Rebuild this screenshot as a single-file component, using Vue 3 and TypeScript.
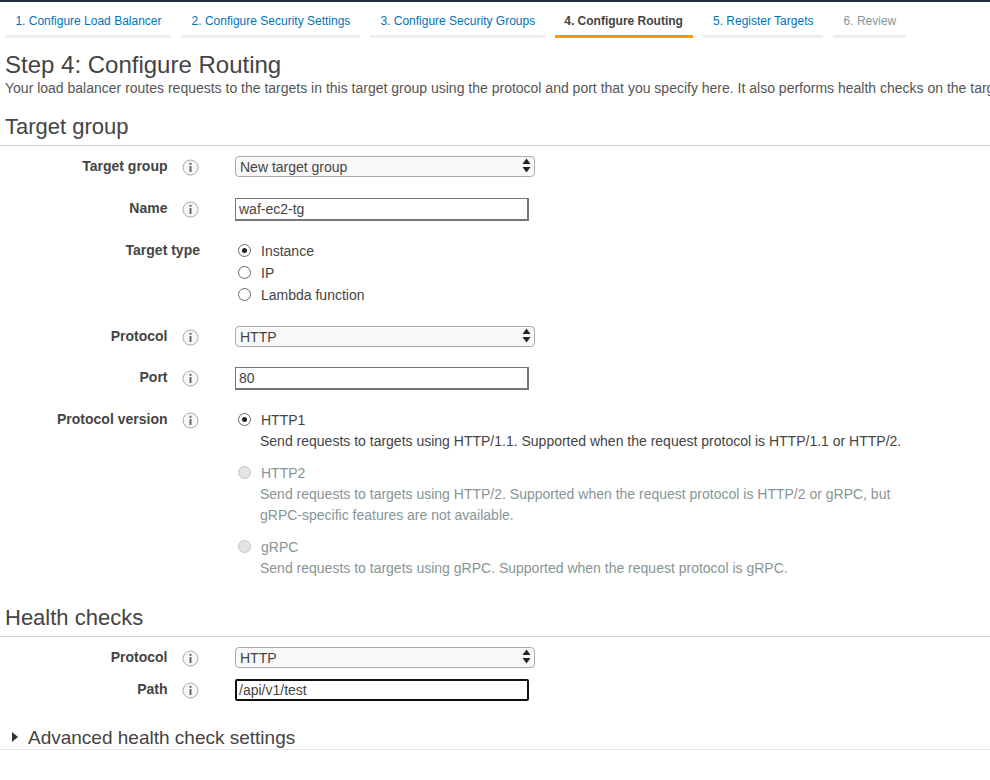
<template>
  <div class="page">
    <nav class="tabs">
      <a
        v-for="tab in tabs"
        :key="tab.label"
        class="tab"
        :class="tab.state"
      >{{ tab.label }}</a>
    </nav>

    <h1 class="title">Step 4: Configure Routing</h1>
    <p class="intro">
      Your load balancer routes requests to the targets in this target group using the protocol and port that you specify here. It also performs health checks on the targets using these health check settings.
    </p>

    <h2 class="section-title first">Target group</h2>
    <div class="form">
      <div class="row row-select">
        <label class="label">Target group</label>
        <svg class="info" width="17" height="17" viewBox="0 0 17 17">
          <circle cx="8.5" cy="8.5" r="7.5" fill="#f7f7f7" stroke="#a8a8a8" />
          <rect x="7.5" y="7" width="2" height="6" fill="#666" />
          <rect x="7.5" y="3.8" width="2" height="2" fill="#666" />
        </svg>
        <div class="select-wrap">
          <select class="select">
            <option>New target group</option>
          </select>
          <svg class="select-arrow" width="9" height="15" viewBox="0 0 9 15">
            <path d="M4.5 0.5 L8.5 6 H0.5 Z M0.5 9 H8.5 L4.5 14.5 Z" fill="#222" />
          </svg>
        </div>
      </div>

      <div class="row row-input">
        <label class="label">Name</label>
        <svg class="info" width="17" height="17" viewBox="0 0 17 17">
          <circle cx="8.5" cy="8.5" r="7.5" fill="#f7f7f7" stroke="#a8a8a8" />
          <rect x="7.5" y="7" width="2" height="6" fill="#666" />
          <rect x="7.5" y="3.8" width="2" height="2" fill="#666" />
        </svg>
        <input class="input" value="waf-ec2-tg" />
      </div>

      <div class="row row-radios">
        <label class="label wide">Target type</label>
        <div class="radios">
          <label v-for="t in targetTypes" :key="t" class="radio-line">
            <input type="radio" name="target-type" :checked="t === 'Instance'" />
            <span>{{ t }}</span>
          </label>
        </div>
      </div>

      <div class="row row-select short">
        <label class="label">Protocol</label>
        <svg class="info" width="17" height="17" viewBox="0 0 17 17">
          <circle cx="8.5" cy="8.5" r="7.5" fill="#f7f7f7" stroke="#a8a8a8" />
          <rect x="7.5" y="7" width="2" height="6" fill="#666" />
          <rect x="7.5" y="3.8" width="2" height="2" fill="#666" />
        </svg>
        <div class="select-wrap">
          <select class="select">
            <option>HTTP</option>
          </select>
          <svg class="select-arrow" width="9" height="15" viewBox="0 0 9 15">
            <path d="M4.5 0.5 L8.5 6 H0.5 Z M0.5 9 H8.5 L4.5 14.5 Z" fill="#222" />
          </svg>
        </div>
      </div>

      <div class="row row-input">
        <label class="label">Port</label>
        <svg class="info" width="17" height="17" viewBox="0 0 17 17">
          <circle cx="8.5" cy="8.5" r="7.5" fill="#f7f7f7" stroke="#a8a8a8" />
          <rect x="7.5" y="7" width="2" height="6" fill="#666" />
          <rect x="7.5" y="3.8" width="2" height="2" fill="#666" />
        </svg>
        <input class="input" value="80" />
      </div>

      <div class="row row-versions">
        <label class="label">Protocol version</label>
        <svg class="info" width="17" height="17" viewBox="0 0 17 17">
          <circle cx="8.5" cy="8.5" r="7.5" fill="#f7f7f7" stroke="#a8a8a8" />
          <rect x="7.5" y="7" width="2" height="6" fill="#666" />
          <rect x="7.5" y="3.8" width="2" height="2" fill="#666" />
        </svg>
        <div class="versions">
          <div
            v-for="v in versions"
            :key="v.name"
            class="version"
            :class="{ disabled: v.disabled }"
          >
            <label class="radio-line">
              <input type="radio" name="version" :checked="!v.disabled" :disabled="v.disabled" />
              <span>{{ v.name }}</span>
            </label>
            <p class="version-desc">{{ v.desc }}</p>
          </div>
        </div>
      </div>
    </div>

    <h2 class="section-title health">Health checks</h2>
    <div class="form">
      <div class="row row-select tight">
        <label class="label">Protocol</label>
        <svg class="info" width="17" height="17" viewBox="0 0 17 17">
          <circle cx="8.5" cy="8.5" r="7.5" fill="#f7f7f7" stroke="#a8a8a8" />
          <rect x="7.5" y="7" width="2" height="6" fill="#666" />
          <rect x="7.5" y="3.8" width="2" height="2" fill="#666" />
        </svg>
        <div class="select-wrap">
          <select class="select">
            <option>HTTP</option>
          </select>
          <svg class="select-arrow" width="9" height="15" viewBox="0 0 9 15">
            <path d="M4.5 0.5 L8.5 6 H0.5 Z M0.5 9 H8.5 L4.5 14.5 Z" fill="#222" />
          </svg>
        </div>
      </div>
      <div class="row row-input">
        <label class="label">Path</label>
        <svg class="info" width="17" height="17" viewBox="0 0 17 17">
          <circle cx="8.5" cy="8.5" r="7.5" fill="#f7f7f7" stroke="#a8a8a8" />
          <rect x="7.5" y="7" width="2" height="6" fill="#666" />
          <rect x="7.5" y="3.8" width="2" height="2" fill="#666" />
        </svg>
        <input class="input focused" value="/api/v1/test" />
      </div>
    </div>

    <div class="advanced">
      <svg width="8" height="12" viewBox="0 0 8 12" class="caret">
        <path d="M1 1 L7 6 L1 11 Z" fill="#333" />
      </svg>
      <span>Advanced health check settings</span>
    </div>
  </div>
</template>

<script setup lang="ts">
interface Tab {
  label: string
  state: string
}

interface Version {
  name: string
  desc: string
  disabled: boolean
}

const tabs: Tab[] = [
  { label: '1. Configure Load Balancer', state: 'done' },
  { label: '2. Configure Security Settings', state: 'done' },
  { label: '3. Configure Security Groups', state: 'done' },
  { label: '4. Configure Routing', state: 'active' },
  { label: '5. Register Targets', state: 'done' },
  { label: '6. Review', state: 'todo' }
]

const targetTypes = ['Instance', 'IP', 'Lambda function']

const versions: Version[] = [
  {
    name: 'HTTP1',
    desc: 'Send requests to targets using HTTP/1.1. Supported when the request protocol is HTTP/1.1 or HTTP/2.',
    disabled: false
  },
  {
    name: 'HTTP2',
    desc: 'Send requests to targets using HTTP/2. Supported when the request protocol is HTTP/2 or gRPC, but gRPC-specific features are not available.',
    disabled: true
  },
  {
    name: 'gRPC',
    desc: 'Send requests to targets using gRPC. Supported when the request protocol is gRPC.',
    disabled: true
  }
]
</script>

<style>
html,
body {
  background: #fff;
  overflow: hidden;
}
</style>

<style scoped>
.page {
  width: 990px;
  height: 780px;
  overflow: hidden;
  border-top: 2px solid #232f3e;
  box-sizing: border-box;
  font-family: "Liberation Sans", Arial, sans-serif;
  font-size: 14px;
  color: #444;
}

/* ---------- Wizard tabs ---------- */
.tabs {
  display: flex;
  gap: 10px;
  padding-left: 5px;
}

.tab {
  height: 33px;
  padding: 0 9.7px 0 10.4px;
  line-height: 39px;
  font-size: 12px;
  white-space: nowrap;
  border-bottom: 3px solid #eee;
  color: #0073bb;
}

.tab.active {
  padding: 0 9.7px 0 9.4px;
  color: #444;
  font-weight: bold;
  border-bottom-color: #ff9900;
}

.tab.todo {
  color: #879596;
}

/* ---------- Headings ---------- */
.title {
  margin: 12px 0 0 5px;
  font-size: 24px;
  font-weight: normal;
  line-height: 30px;
}

.intro {
  margin: 0 0 0 5px;
  line-height: 16px;
  white-space: nowrap;
  color: #555;
}

.section-title {
  margin: 0;
  padding: 0 0 5px 5px;
  font-size: 22px;
  font-weight: normal;
  line-height: 26px;
  border-bottom: 1px solid #ccc;
}

.section-title.first {
  margin-top: 18px;
}

.section-title.health {
  margin-top: 26px;
}

/* ---------- Form rows ---------- */
.form {
  padding-top: 10px;
}

.row {
  display: grid;
  grid-template-columns: 167.5px 17px 1fr;
  column-gap: 14.5px;
  align-items: start;
}

.row > :last-child {
  margin-left: 21.5px;
}

.label {
  text-align: right;
  font-weight: bold;
  line-height: 20px;
  white-space: nowrap;
  color: #444;
}

/* Target type has no info icon, so its label runs up to the end of that column */
.label.wide {
  grid-column: 1 / span 2;
  margin-right: -1px;
}

.info {
  margin-top: 3px;
}

.row-select {
  height: 42px;
}

.row-select.short {
  height: 41px;
}

.row-select.tight {
  height: 32px;
}

.row-input {
  height: 42px;
}

.row-radios {
  height: 86px;
}

/* ---------- Controls ---------- */
.select-wrap {
  position: relative;
  width: 300px;
}

.select {
  display: block;
  width: 100%;
  height: 21px;
  padding: 0 0 0 4px;
  appearance: none;
  border: 1px solid #aaa;
  border-radius: 4px;
  background: #f8f8f8;
  font: 14px "Liberation Sans", Arial, sans-serif;
  color: #444;
}

.select-arrow {
  position: absolute;
  top: 2px;
  right: 4px;
  pointer-events: none;
}

.input {
  display: block;
  width: 294px;
  height: 23px;
  padding: 0 3px;
  box-sizing: border-box;
  border: 1px solid #767676;
  border-width: 1px 2px 2px 1px;
  background: #fff;
  font: 14px "Liberation Sans", Arial, sans-serif;
  color: #444;
  outline: none;
}

.input.focused {
  height: 22px;
  padding: 0 2px;
  border: 2px solid #111;
  border-radius: 2px;
}

.radios {
  display: flex;
  flex-direction: column;
}

.radio-line {
  display: flex;
  align-items: center;
  height: 22px;
  line-height: 22px;
}

.radio-line input {
  position: relative;
  flex: none;
  width: 13px;
  height: 13px;
  margin: 0 10px 2px 3px;
  appearance: none;
  border: 1px solid #666;
  border-radius: 50%;
  background: #fff;
}

.radio-line input:checked::before {
  content: "";
  position: absolute;
  top: 3px;
  left: 3px;
  width: 5px;
  height: 5px;
  border-radius: 50%;
  background: #222;
}

.radio-line input:disabled {
  border-color: #c4c4c4;
  background: #e4e4e4;
}

/* ---------- Protocol versions ---------- */
.versions {
  display: flex;
  flex-direction: column;
  gap: 10px;
}

.version-desc {
  margin: 0;
  padding: 0 85px 0 25px;
  line-height: 21px;
  color: #444;
}

.version.disabled .radio-line,
.version.disabled .version-desc {
  color: #879596;
}

/* ---------- Advanced section ---------- */
.advanced {
  display: flex;
  align-items: center;
  gap: 9px;
  height: 22px;
  padding: 6px 0 0 11px;
  font-size: 19px;
  border-bottom: 1px solid #e5e5e5;
}

.caret {
  flex: none;
  margin-top: -2px;
}
</style>
